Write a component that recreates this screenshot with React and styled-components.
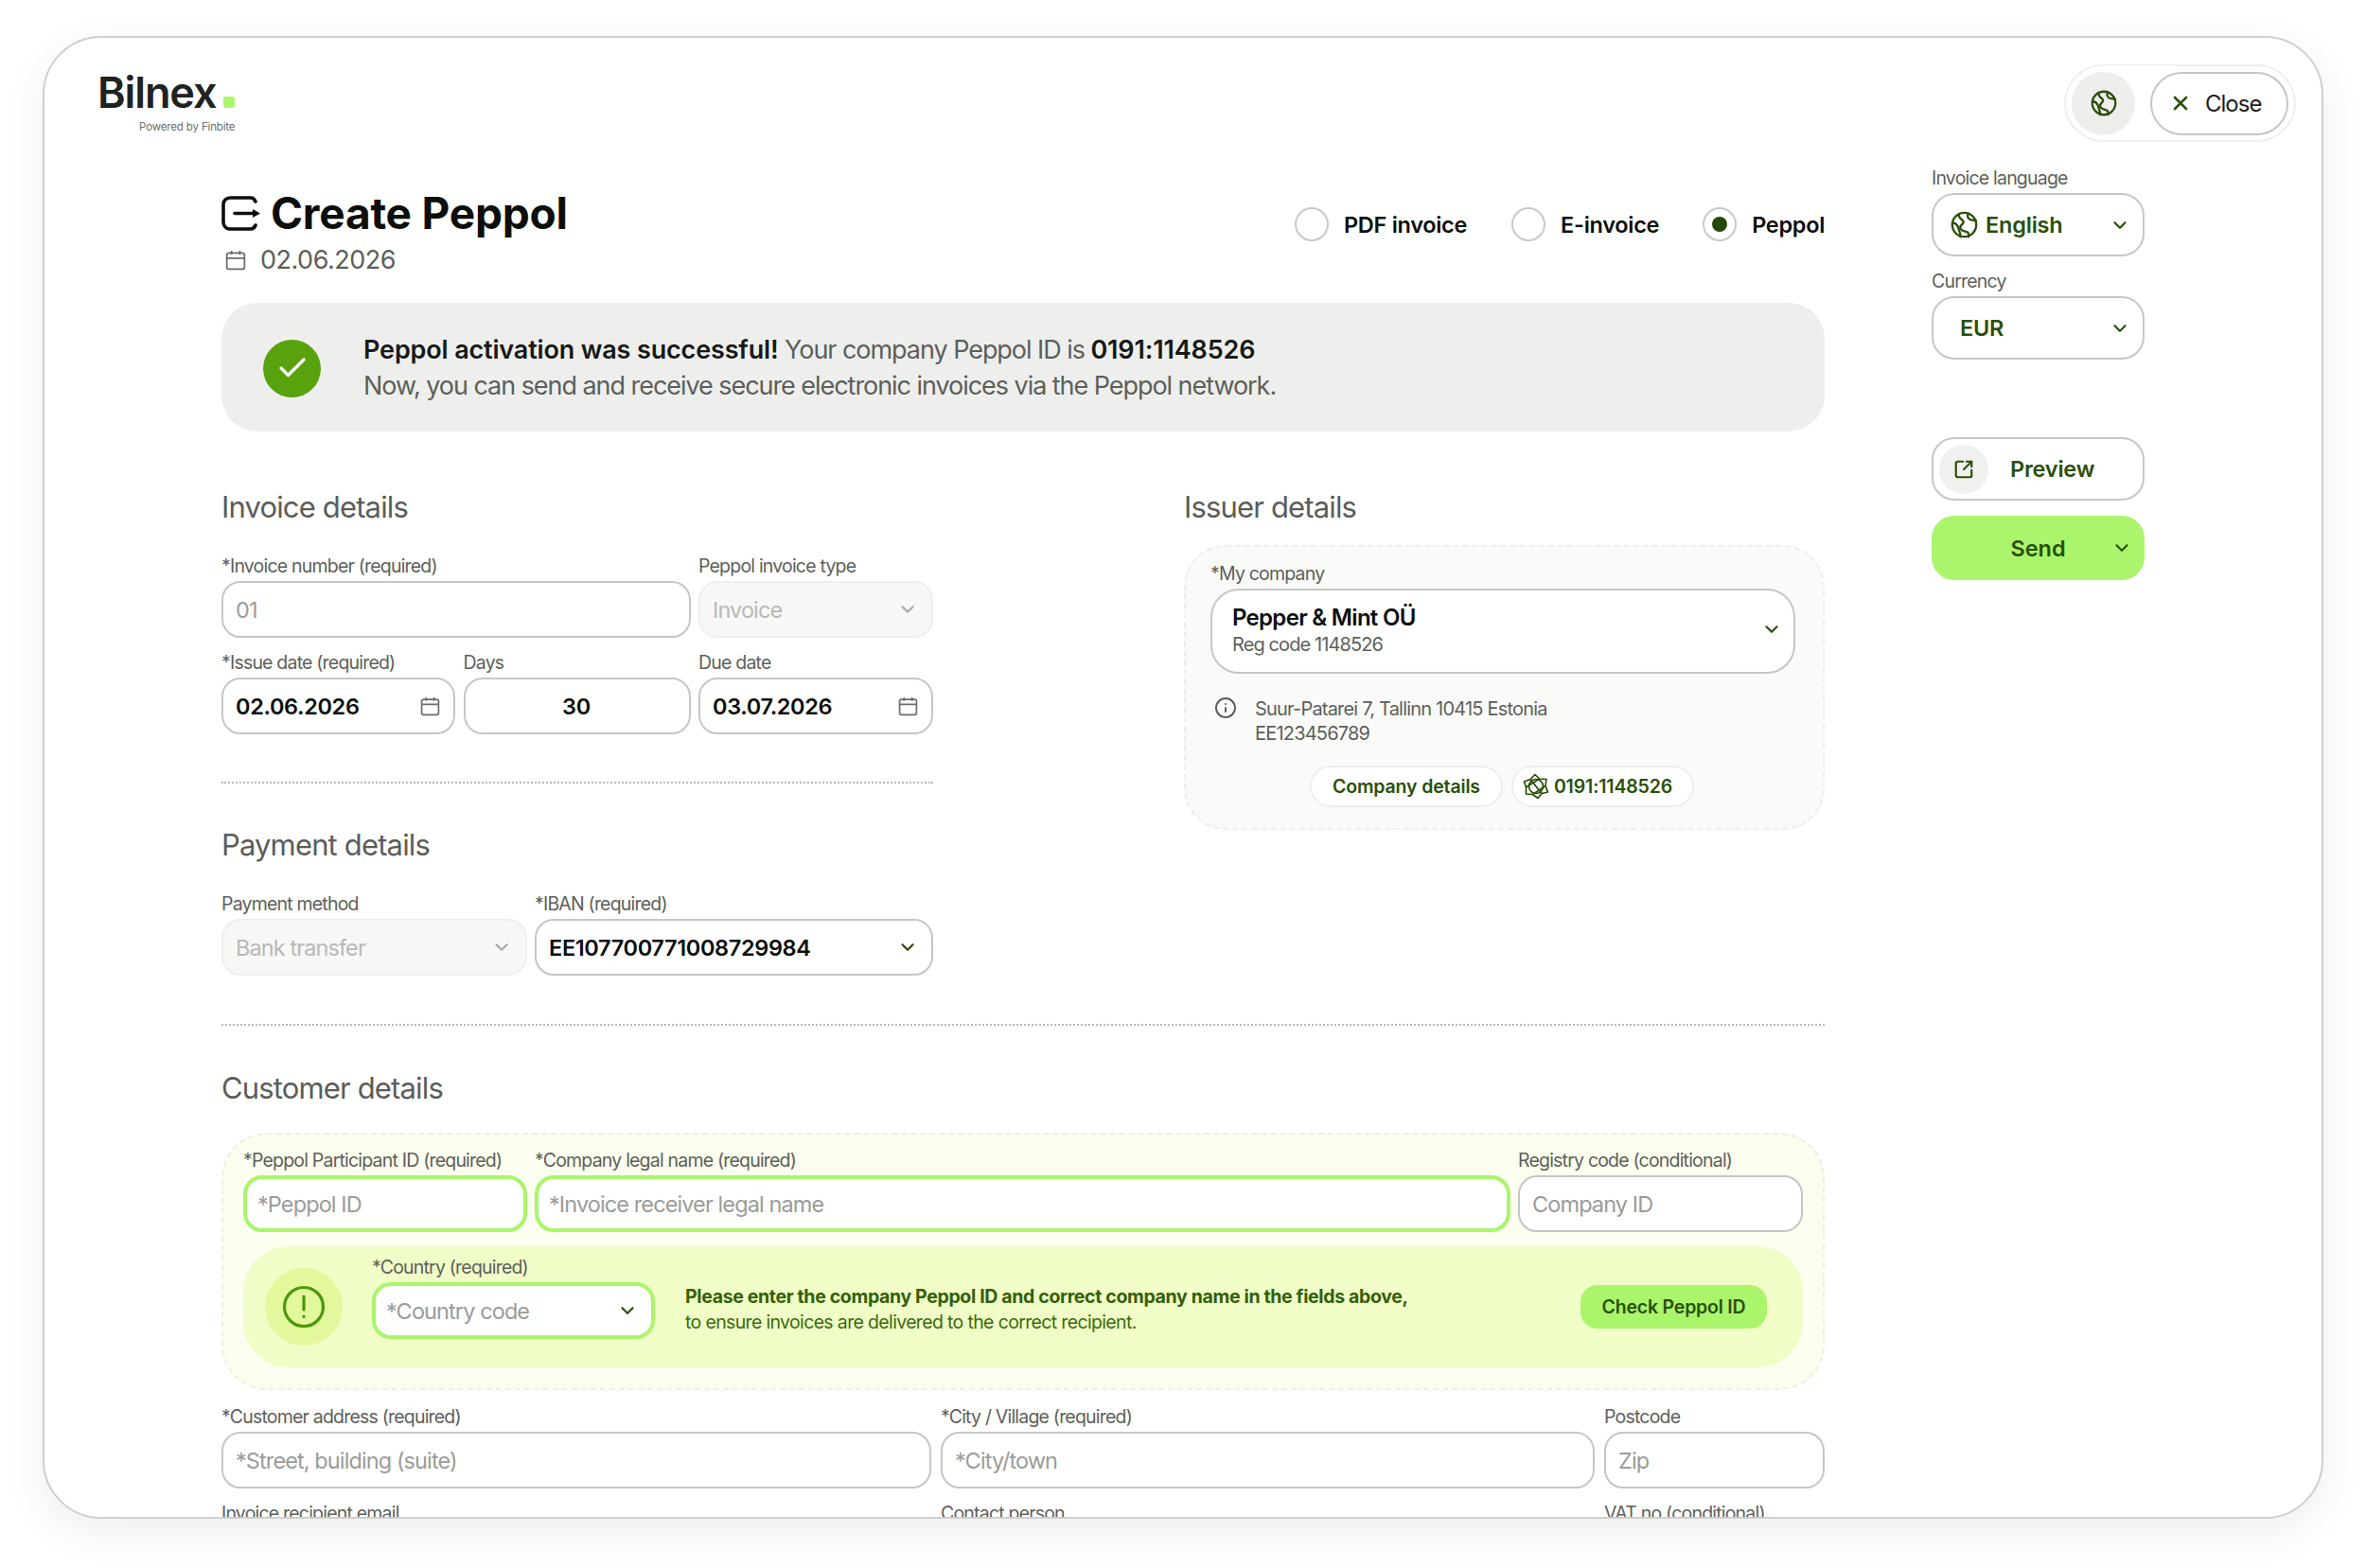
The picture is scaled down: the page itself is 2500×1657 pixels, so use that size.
import React from "react";
import styled, { createGlobalStyle } from "styled-components";
import { ChevronDown, X, Info, SquareArrowOutUpRight, Check } from "lucide-react";

const GREEN = "#2a4f08";
const LIME = "#aaf56b";

const Global = createGlobalStyle`
  html, body { margin: 0; background: #fff; }
  body { font-family: Inter, "Liberation Sans", sans-serif; color: #0c0e0b; -webkit-font-smoothing: antialiased; }
  * { box-sizing: border-box; }
`;

const Page = styled.div`
  width: 2500px;
  height: 1657px;
  padding: 38px 45px 52px;
  overflow: hidden;
`;
const Card = styled.div`
  width: 2410px;
  height: 1567px;
  border: 2.5px solid #cfcfcf;
  border-radius: 62px;
  background: #fff;
  overflow: hidden;
  box-shadow: 0 14px 46px rgba(0, 0, 0, 0.07);
`;
const TopBar = styled.header`
  display: flex;
  justify-content: space-between;
  align-items: flex-start;
  padding: 28px 27px 0 56px;
`;
const LogoBlock = styled.div`
  display: flex;
  flex-direction: column;
  align-items: flex-end;
  padding-top: 6px;
`;
const LogoRow = styled.div`
  display: flex;
  align-items: baseline;
  gap: 8px;
`;
const LogoText = styled.span`
  font-size: 45px;
  font-weight: 600;
  line-height: 48px;
  letter-spacing: -1.1px;
  color: #20221f;
`;
const LogoDot = styled.span`
  width: 12px;
  height: 12px;
  border-radius: 3px;
  background: ${LIME};
`;
const LogoSub = styled.span`
  font-size: 11.5px;
  line-height: 16px;
  margin-top: 4px;
  letter-spacing: -0.15px;
  color: #6c6e69;
`;
const Controls = styled.div`
  display: flex;
  align-items: center;
  gap: 16px;
  height: 82px;
  padding: 0 6px;
  border: 2px solid #efefef;
  border-radius: 41px;
`;
const GlobeButton = styled.div`
  width: 67px;
  height: 67px;
  border-radius: 50%;
  background: #eeefed;
  display: flex;
  align-items: center;
  justify-content: center;
`;
const CloseButton = styled.div`
  display: flex;
  align-items: center;
  gap: 14px;
  width: 146px;
  height: 67px;
  padding-left: 18px;
  border: 2px solid #c6c6c6;
  border-radius: 34px;
  font-size: 24px;
  letter-spacing: -1px;
  color: #1c1e1b;
`;
const Body = styled.div`
  display: grid;
  grid-template-columns: 1694px 225px;
  column-gap: 113px;
  padding: 28px 0 0 187px;
`;
const Main = styled.main`
  padding-top: 19px;
`;
const TitleRow = styled.div`
  display: flex;
  justify-content: space-between;
  align-items: flex-start;
`;
const TitleBlock = styled.div`
  display: flex;
  flex-direction: column;
`;
const Title = styled.h1`
  display: flex;
  align-items: center;
  gap: 10px;
  margin: 0;
  font-size: 46px;
  line-height: 56px;
  font-weight: 700;
  letter-spacing: -0.2px;
`;
const DateRow = styled.div`
  display: flex;
  align-items: center;
  gap: 15px;
  margin-top: 5px;
  padding-left: 4px;
  font-size: 27px;
  line-height: 34px;
  letter-spacing: -0.5px;
  color: #5d5f5a;
`;
const Radios = styled.div`
  display: flex;
  padding-top: 22px;
`;
const RadioItem = styled.div`
  display: flex;
  align-items: center;
  gap: 16px;
  margin-left: ${(p) => p.$gap || 0}px;
  font-size: 23.5px;
  font-weight: 600;
  letter-spacing: -0.3px;
`;
const RadioMark = styled.span`
  width: 36px;
  height: 36px;
  border: 2px solid #c9c9c9;
  border-radius: 50%;
  display: flex;
  align-items: center;
  justify-content: center;
  &::after {
    content: "";
    display: ${(p) => (p.$on ? "block" : "none")};
    width: 16px;
    height: 16px;
    border-radius: 50%;
    background: #254a05;
  }
`;
const Banner = styled.section`
  display: flex;
  align-items: center;
  gap: 45px;
  height: 136px;
  margin-top: 28px;
  padding: 2px 0 0 44px;
  border-radius: 38px;
  background: #eeefed;
  font-size: 27px;
  line-height: 38px;
  letter-spacing: -1.05px;
  color: #5d5f5a;
`;
const SuccessIcon = styled.div`
  width: 61px;
  height: 61px;
  border-radius: 50%;
  background: #58a20e;
  color: #fff;
  display: flex;
  align-items: center;
  justify-content: center;
`;
const BannerStrong = styled.strong`
  font-weight: 600;
  letter-spacing: -0.15px;
  color: #171916;
`;
const Columns = styled.div`
  display: flex;
  justify-content: space-between;
  margin-top: 60px;
`;
const Column = styled.div`
  width: ${(p) => p.$w}px;
`;
const Heading = styled.h2`
  margin: 0;
  font-size: 31px;
  line-height: 40px;
  font-weight: 400;
  letter-spacing: -0.85px;
  color: #5b5d58;
  margin-top: ${(p) => p.$top || 0}px;
`;
const FieldGrid = styled.div`
  display: grid;
  grid-template-columns: ${(p) => p.$cols};
  column-gap: ${(p) => p.$gap || 8.5}px;
  row-gap: ${(p) => p.$rowGap || 16}px;
  margin-top: ${(p) => p.$top || 0}px;
`;
const Field = styled.div`
  display: flex;
  flex-direction: column;
  gap: 6px;
  min-width: 0;
  grid-column: ${(p) => p.$span || "auto"};
`;
const Label = styled.label`
  font-size: 19.5px;
  line-height: 20px;
  letter-spacing: -0.8px;
  color: #5d5f5a;
  white-space: nowrap;
`;
const Control = styled.div`
  display: flex;
  align-items: center;
  justify-content: ${(p) => (p.$center ? "center" : "space-between")};
  height: 60px;
  padding: 0 14px 0 ${(p) => (p.$accent ? 11 : 13)}px;
  border: ${(p) => (p.$accent ? `4px solid ${LIME}` : p.$disabled ? "2px solid #eeefec" : "2px solid #c6c6c4")};
  border-radius: 20px;
  background: ${(p) => (p.$disabled ? "#f7f8f6" : "#fff")};
  font-size: 23.5px;
  font-weight: ${(p) => (p.$value ? 600 : 400)};
  letter-spacing: ${(p) => (p.$value ? "-0.35px" : "-0.9px")};
  color: ${(p) => (p.$value ? "#0c0e0b" : p.$disabled ? "#b7b9b4" : "#9a9c98")};
  white-space: nowrap;
`;
const Divider = styled.hr`
  margin: ${(p) => p.$m};
  border: 0;
  border-top: 2px dotted #b8b8b8;
`;
const IssuerPanel = styled.div`
  margin-top: 20px;
  height: 301px;
  padding: 18px 29px 18px 26px;
  border: 2px dashed #eceee9;
  border-radius: 44px;
  background: #fafbf9;
`;
const CompanySelect = styled.div`
  display: flex;
  align-items: center;
  justify-content: space-between;
  height: 90px;
  padding: 0 12px 0 21px;
  border: 2px solid #c6c6c4;
  border-radius: 30px;
  background: #fff;
  & > svg { margin-top: -4px; }
`;
const CompanyName = styled.div`
  font-size: 24px;
  line-height: 29px;
  font-weight: 600;
  letter-spacing: -0.7px;
`;
const CompanyCode = styled.div`
  font-size: 20px;
  line-height: 29px;
  letter-spacing: -0.9px;
  color: #5d5f5a;
`;
const AddressRow = styled.div`
  display: flex;
  gap: 19px;
  margin-top: 24px;
  padding-left: 4px;
  font-size: 20px;
  line-height: 26px;
  letter-spacing: -0.8px;
  color: #5d5f5a;
`;
const PillRow = styled.div`
  display: flex;
  justify-content: center;
  gap: 9px;
  margin-top: 21px;
  padding-right: 2px;
`;
const Pill = styled.div`
  display: flex;
  align-items: center;
  gap: 5px;
  height: 44px;
  padding: 0 ${(p) => p.$pad || 22}px 0 ${(p) => p.$padLeft || 22}px;
  border: 2px solid #eeefec;
  border-radius: 22px;
  background: #fff;
  font-size: 19.5px;
  font-weight: 600;
  letter-spacing: -0.15px;
  color: ${GREEN};
`;
const PeppolPanel = styled.div`
  margin-top: 27px;
  padding: 17px 21px 22px;
  border: 2px dashed #eef0dd;
  border-radius: 48px;
  background: #fcfeef;
`;
const AlertPanel = styled.div`
  display: flex;
  align-items: center;
  height: 128px;
  margin-top: 15px;
  padding: 0 38px 0 23px;
  border-radius: 48px;
  background: #f0fdc7;
`;
const AlertIcon = styled.div`
  width: 82px;
  height: 82px;
  flex: none;
  margin-right: 31px;
  border-radius: 50%;
  background: #e3f89d;
  display: flex;
  align-items: center;
  justify-content: center;
`;
const CountryField = styled(Field)`
  width: 299px;
  flex: none;
  margin: -18px 32px 0 0;
`;
const AlertText = styled.div`
  margin-top: 6px;
  font-size: 19.5px;
  line-height: 27px;
  letter-spacing: -0.65px;
  color: #3c6a0c;
`;
const AlertStrong = styled.strong`
  display: block;
  font-weight: 700;
  letter-spacing: -0.35px;
  color: #336008;
`;
const CheckButton = styled.div`
  display: flex;
  align-items: center;
  justify-content: center;
  width: 197px;
  height: 46px;
  margin-left: auto;
  border-radius: 18px;
  background: ${LIME};
  font-size: 19.5px;
  font-weight: 600;
  letter-spacing: -0.2px;
  color: ${GREEN};
`;
const Side = styled.aside`
  display: flex;
  flex-direction: column;
`;
const SideSelect = styled.div`
  display: flex;
  align-items: center;
  gap: 8px;
  height: 67px;
  padding: 0 13px 0 ${(p) => p.$pad || 18}px;
  border: 2px solid #c6c6c4;
  border-radius: 24px;
  font-size: 23.5px;
  font-weight: 600;
  letter-spacing: -0.2px;
  color: ${GREEN};
  & > svg:last-child { margin-left: auto; }
`;
const SideField = styled(Field)`
  margin-top: ${(p) => p.$top || 0}px;
`;
const PreviewButton = styled.div`
  display: flex;
  align-items: center;
  gap: 23px;
  height: 67px;
  margin-top: 82px;
  padding-left: 6px;
  border: 2px solid #c6c6c4;
  border-radius: 24px;
  font-size: 23.5px;
  font-weight: 600;
  letter-spacing: -0.2px;
  color: ${GREEN};
`;
const PreviewIcon = styled.span`
  width: 52px;
  height: 52px;
  border-radius: 50%;
  background: #f0f1ef;
  display: flex;
  align-items: center;
  justify-content: center;
`;
const SendButton = styled.div`
  display: grid;
  grid-template-columns: 1fr auto 1fr;
  align-items: center;
  height: 68px;
  margin-top: 16px;
  padding: 0 13px;
  border-radius: 24px;
  background: ${LIME};
  font-size: 23.5px;
  font-weight: 600;
  color: ${GREEN};
  & > svg { grid-column: 3; justify-self: end; }
  & > span { grid-column: 2; }
`;

const Globe = ({ size = 30 }) => (
  <svg width={size} height={size} viewBox="0 0 32 32" fill="none" stroke={GREEN} strokeWidth="2.6" strokeLinecap="round">
    <circle cx="16" cy="16" r="14" />
    <path d="M10 3.500c-1 3 1 5 3 6.500s3 3 1 5-4 3-2 6 6 2 8 4 1 5 1 5" />
    <path d="M2.500 14c3 0 5 2 6 4s1 4 2 6 1 4 1 6" />
    <path d="M21 3c-2 2-1 5 1 6.500s5 1 7.500 1.500" />
  </svg>
);
const Calendar = ({ size = 21, color = "#6a6c67" }) => (
  <svg width={size} height={size} viewBox="0 0 20 20" fill="none" stroke={color} strokeWidth="1.6">
    <rect x="1.500" y="3" width="17" height="15.500" rx="2" />
    <path d="M1.500 8h17M6 1v3.500M14 1v3.500" />
  </svg>
);
const Chev = ({ color = GREEN, size = 22 }) => <ChevronDown size={size} color={color} strokeWidth={2.4} />;
const TitleIcon = () => (
  <svg width="42" height="37" viewBox="0 0 42 37" fill="none" stroke="#0c0e0b" strokeWidth="3.6" strokeLinecap="round">
    <path d="M36 6C35 3.500 33 2 31 2H9a7 7 0 0 0-7 7v19a7 7 0 0 0 7 7h22c2 0 4-1.500 5-4" />
    <path d="M14 18.500H33" />
    <path d="M33 14l8 4.500-8 4.500z" fill="#0c0e0b" strokeWidth="0" />
  </svg>
);
const PeppolIcon = () => (
  <svg width="28" height="28" viewBox="0 0 28 28" fill="none" stroke={GREEN} strokeWidth="1.7" strokeLinejoin="round">
    <path d="M13 1.500L17.500 6 25 6.500 24 13.500 26.500 20 20 21.500 16 26.500 10.500 22.500 3.500 22 3.500 15 1.500 9 8 6.500z" />
    <circle cx="14" cy="14" r="7.500" />
    <path d="M8 6.500L20 21.500M3.500 15L17.500 6M10.500 22.500L24 13.500" />
  </svg>
);
const AlertGlyph = () => (
  <svg width="46" height="46" viewBox="0 0 46 46" fill="none" stroke="#4a980b" strokeWidth="3.2" strokeLinecap="round">
    <circle cx="23" cy="23" r="20.500" />
    <path d="M23 12v14" />
    <path d="M23 33v.5" />
  </svg>
);

const TextField = ({ label, placeholder, span, accent }) => (
  <Field $span={span}>
    <Label>{label}</Label>
    <Control $accent={accent}>{placeholder}</Control>
  </Field>
);
const DateField = ({ label, value }) => (
  <Field>
    <Label>{label}</Label>
    <Control $value>{value}<Calendar /></Control>
  </Field>
);
const DisabledSelect = ({ label, value }) => (
  <Field>
    <Label>{label}</Label>
    <Control $disabled>{value}<Chev color="#a8aaa5" /></Control>
  </Field>
);

export default function App() {
  return (
    <>
      <Global />
      <Page>
        <Card>
          <TopBar>
            <LogoBlock>
              <LogoRow>
                <LogoText>Bilnex</LogoText>
                <LogoDot />
              </LogoRow>
              <LogoSub>Powered by Finbite</LogoSub>
            </LogoBlock>
            <Controls>
              <GlobeButton><Globe size={28} /></GlobeButton>
              <CloseButton><X size={24} color={GREEN} strokeWidth={2.6} />Close</CloseButton>
            </Controls>
          </TopBar>
          <Body>
            <Main>
              <TitleRow>
                <TitleBlock>
                  <Title><TitleIcon />Create Peppol</Title>
                  <DateRow><Calendar size={22} />02.06.2026</DateRow>
                </TitleBlock>
                <Radios>
                  <RadioItem><RadioMark />PDF invoice</RadioItem>
                  <RadioItem $gap={47}><RadioMark />E-invoice</RadioItem>
                  <RadioItem $gap={46}><RadioMark $on />Peppol</RadioItem>
                </Radios>
              </TitleRow>
              <Banner>
                <SuccessIcon><Check size={36} strokeWidth={2.2} /></SuccessIcon>
                <div>
                  <div><BannerStrong>Peppol activation was successful!</BannerStrong> Your company Peppol ID is <BannerStrong>0191:1148526</BannerStrong></div>
                  <div>Now, you can send and receive secure electronic invoices via the Peppol network.</div>
                </div>
              </Banner>
              <Columns>
                <Column $w={752}>
                  <Heading>Invoice details</Heading>
                  <FieldGrid $cols="247px 240px 248px" $top={32}>
                    <TextField label="*Invoice number (required)" placeholder="01" span="span 2" />
                    <DisabledSelect label="Peppol invoice type" value="Invoice" />
                    <DateField label="*Issue date (required)" value="02.06.2026" />
                    <Field>
                      <Label>Days</Label>
                      <Control $value $center>30</Control>
                    </Field>
                    <DateField label="Due date" value="03.07.2026" />
                  </FieldGrid>
                  <Divider $m="50px 0 0" />
                  <Heading $top={45}>Payment details</Heading>
                  <FieldGrid $cols="323px 421px" $gap={8} $top={32}>
                    <DisabledSelect label="Payment method" value="Bank transfer" />
                    <Field>
                      <Label>*IBAN (required)</Label>
                      <Control $value>EE107700771008729984<Chev /></Control>
                    </Field>
                  </FieldGrid>
                </Column>
                <Column $w={677}>
                  <Heading>Issuer details</Heading>
                  <IssuerPanel>
                    <Field>
                      <Label>*My company</Label>
                      <CompanySelect>
                        <div>
                          <CompanyName>Pepper &amp; Mint OÜ</CompanyName>
                          <CompanyCode>Reg code 1148526</CompanyCode>
                        </div>
                        <Chev />
                      </CompanySelect>
                    </Field>
                    <AddressRow>
                      <Info size={24} color="#5d5f5a" strokeWidth={2} />
                      <div>
                        <div>Suur-Patarei 7, Tallinn 10415 Estonia</div>
                        <div>EE123456789</div>
                      </div>
                    </AddressRow>
                    <PillRow>
                      <Pill>Company details</Pill>
                      <Pill $padLeft={10} $pad={21}><PeppolIcon />0191:1148526</Pill>
                    </PillRow>
                  </IssuerPanel>
                </Column>
              </Columns>
              <Divider $m="51px 0 0" />
              <Heading $top={46}>Customer details</Heading>
              <PeppolPanel>
                <FieldGrid $cols="300px 1031px 301px" $gap={8}>
                  <TextField label="*Peppol Participant ID (required)" placeholder="*Peppol ID" accent />
                  <TextField label="*Company legal name (required)" placeholder="*Invoice receiver legal name" accent />
                  <TextField label="Registry code (conditional)" placeholder="Company ID" />
                </FieldGrid>
                <AlertPanel>
                  <AlertIcon><AlertGlyph /></AlertIcon>
                  <CountryField>
                    <Label>*Country (required)</Label>
                    <Control $accent>*Country code<Chev /></Control>
                  </CountryField>
                  <AlertText>
                    <AlertStrong>Please enter the company Peppol ID and correct company name in the fields above,</AlertStrong>
                    to ensure invoices are delivered to the correct recipient.
                  </AlertText>
                  <CheckButton>Check Peppol ID</CheckButton>
                </AlertPanel>
              </PeppolPanel>
              <FieldGrid $cols="750px 691px 233px" $gap={10} $top={18}>
                <TextField label="*Customer address (required)" placeholder="*Street, building (suite)" />
                <TextField label="*City / Village (required)" placeholder="*City/town" />
                <TextField label="Postcode" placeholder="Zip" />
                <TextField label="Invoice recipient email" />
                <TextField label="Contact person" />
                <TextField label="VAT no (conditional)" />
              </FieldGrid>
            </Main>
            <Side>
              <SideField>
                <Label>Invoice language</Label>
                <SideSelect><Globe size={29} />English<Chev /></SideSelect>
              </SideField>
              <SideField $top={16}>
                <Label>Currency</Label>
                <SideSelect $pad={28}>EUR<Chev /></SideSelect>
              </SideField>
              <PreviewButton>
                <PreviewIcon><SquareArrowOutUpRight size={22} color={GREEN} strokeWidth={2.4} /></PreviewIcon>
                Preview
              </PreviewButton>
              <SendButton><span>Send</span><Chev /></SendButton>
            </Side>
          </Body>
        </Card>
      </Page>
    </>
  );
}
